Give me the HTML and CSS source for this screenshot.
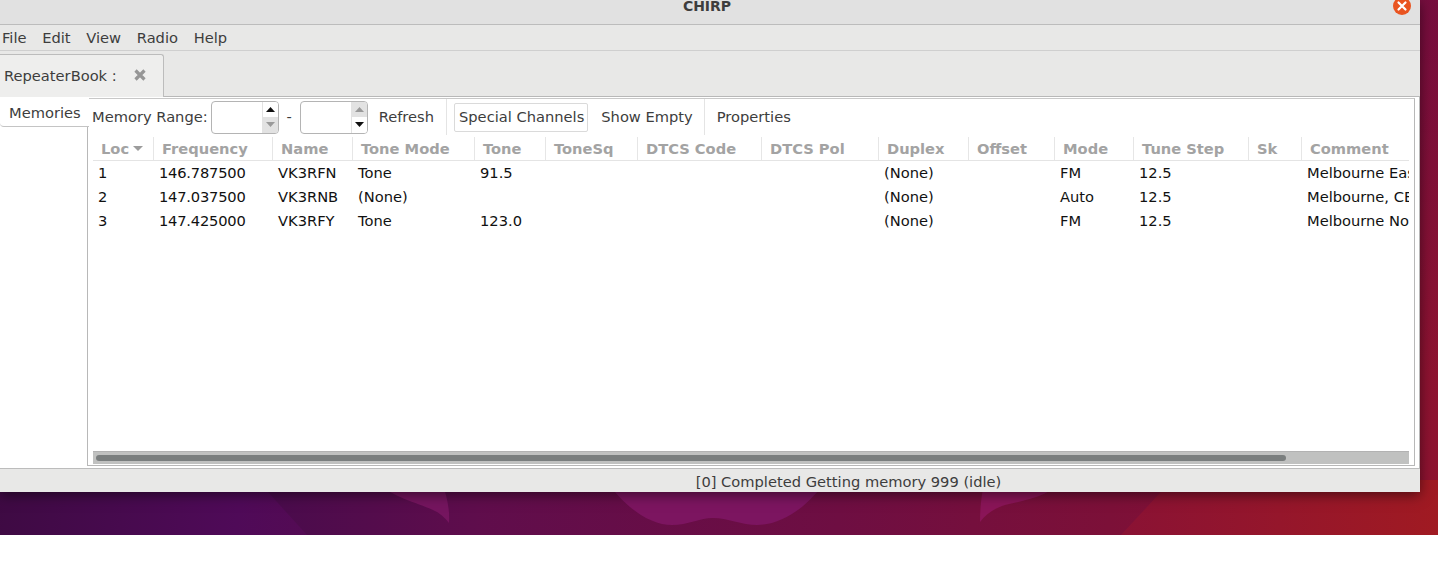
FILE: index.html
```html
<!DOCTYPE html>
<html lang="en">
<head>
<meta charset="utf-8">
<title>CHIRP</title>
<link rel="stylesheet" href="styles.css">
</head>
<body>
<div class="desktop">
  <svg class="wallpaper" width="1438" height="535" viewBox="0 0 1438 535" aria-hidden="true">
    <defs>
      <linearGradient id="wedge" x1="0" y1="0" x2="1" y2="0">
        <stop offset="0" stop-color="#480b4c"/>
        <stop offset="1" stop-color="#5f0d4c"/>
      </linearGradient>
      <linearGradient id="right" x1="0" y1="0" x2="1" y2="0">
        <stop offset="0" stop-color="#8a1234"/>
        <stop offset="1" stop-color="#a01a22"/>
      </linearGradient>
    </defs>
    <path d="M257 480L307 535H480V480Z" fill="url(#wedge)"/>
    <path d="M1172 480L1121 535H1438V480Z" fill="url(#right)"/>
    <path d="M375 480C392 498 416 502 433 510C440 513 445 518 449 523C450 510 447 495 441 480Z" fill="#75155f"/>
    <path d="M606 480C625 508 650 525 672 525C688 525 700 518 713 518C727 518 742 525 757 525C783 525 810 505 826 480Z" fill="#7c1560"/>
    <path d="M1060 480C1050 497 1025 500 1005 505C995 508 986 514 980 522C980 510 981 495 985 480Z" fill="#8a1558"/>
  </svg>
  <div class="window">
    <header class="titlebar">
      <span class="title">CHIRP</span>
      <span class="close-btn">
        <svg width="18" height="18" viewBox="0 0 18 18"><path d="M5.5 5.5L12.5 12.5M12.5 5.5L5.5 12.5" stroke="#fff" stroke-width="2.2" stroke-linecap="round"/></svg>
      </span>
    </header>
    <nav class="menubar">
      <span class="menu-item">File</span>
      <span class="menu-item">Edit</span>
      <span class="menu-item">View</span>
      <span class="menu-item">Radio</span>
      <span class="menu-item">Help</span>
    </nav>
    <div class="tabbar">
      <div class="tab">
        <span>RepeaterBook :</span>
        <svg class="tab-close" width="12" height="12" viewBox="0 0 12 12"><path d="M1.5 1.5L10.5 10.5M10.5 1.5L1.5 10.5" stroke="#969696" stroke-width="3.2"/></svg>
      </div>
    </div>
    <main class="page">
      <aside class="side">
        <div class="side-tab">Memories</div>
      </aside>
      <section class="panel">
        <div class="toolbar">
          <span class="tool">Memory Range:</span>
          <div class="spin">
            <div class="spin-field"></div>
            <div class="spin-btns">
              <div class="spin-btn"><svg width="9" height="5" viewBox="0 0 9 5"><path d="M0 5L4.5 0L9 5Z" fill="#111"/></svg></div>
              <div class="spin-btn off"><svg width="9" height="5" viewBox="0 0 9 5"><path d="M0 0L4.5 5L9 0Z" fill="#9a9a9a"/></svg></div>
            </div>
          </div>
          <span class="tool dash">-</span>
          <div class="spin">
            <div class="spin-field"></div>
            <div class="spin-btns">
              <div class="spin-btn off"><svg width="9" height="5" viewBox="0 0 9 5"><path d="M0 5L4.5 0L9 5Z" fill="#9a9a9a"/></svg></div>
              <div class="spin-btn"><svg width="9" height="5" viewBox="0 0 9 5"><path d="M0 0L4.5 5L9 0Z" fill="#111"/></svg></div>
            </div>
          </div>
          <span class="tool refresh">Refresh</span>
          <span class="tool-sep first"></span>
          <span class="tool boxed">Special Channels</span>
          <span class="tool empty">Show Empty</span>
          <span class="tool-sep second"></span>
          <span class="tool props">Properties</span>
        </div>
        <div class="table">
          <div class="row head">
            <div class="th"><span>Loc</span><svg class="sort" width="10" height="5" viewBox="0 0 10 5"><path d="M0 0L5 5L10 0Z" fill="#9c9c9c"/></svg></div>
            <div class="th">Frequency</div>
            <div class="th">Name</div>
            <div class="th">Tone Mode</div>
            <div class="th">Tone</div>
            <div class="th">ToneSq</div>
            <div class="th">DTCS Code</div>
            <div class="th">DTCS Pol</div>
            <div class="th">Duplex</div>
            <div class="th">Offset</div>
            <div class="th">Mode</div>
            <div class="th">Tune Step</div>
            <div class="th">Sk</div>
            <div class="th">Comment</div>
          </div>
          <div class="row">
            <div class="td">1</div><div class="td freq">146.787500</div><div class="td">VK3RFN</div><div class="td">Tone</div><div class="td">91.5</div><div class="td"></div><div class="td"></div><div class="td"></div><div class="td">(None)</div><div class="td"></div><div class="td">FM</div><div class="td">12.5</div><div class="td"></div><div class="td">Melbourne East</div>
          </div>
          <div class="row">
            <div class="td">2</div><div class="td freq">147.037500</div><div class="td">VK3RNB</div><div class="td">(None)</div><div class="td"></div><div class="td"></div><div class="td"></div><div class="td"></div><div class="td">(None)</div><div class="td"></div><div class="td">Auto</div><div class="td">12.5</div><div class="td"></div><div class="td">Melbourne, CBD</div>
          </div>
          <div class="row">
            <div class="td">3</div><div class="td freq">147.425000</div><div class="td">VK3RFY</div><div class="td">Tone</div><div class="td">123.0</div><div class="td"></div><div class="td"></div><div class="td"></div><div class="td">(None)</div><div class="td"></div><div class="td">FM</div><div class="td">12.5</div><div class="td"></div><div class="td">Melbourne North</div>
          </div>
        </div>
        <div class="scrollbar"><div class="thumb"></div></div>
      </section>
    </main>
    <footer class="statusbar">[0] Completed Getting memory 999 (idle)</footer>
  </div>
</div>
</body>
</html>
```
FILE: styles.css
```css
* { box-sizing: border-box; }
html, body { margin: 0; padding: 0; background: #fff; }
body { width: 1438px; height: 575px; overflow: hidden; font-family: "DejaVu Sans", sans-serif; font-size: 14.67px; color: #3d3d3d; }

.desktop { position: relative; width: 1438px; height: 535px; overflow: hidden;
  background: linear-gradient(to bottom, rgba(70, 0, 90, .3), rgba(70, 0, 90, 0) 70%), linear-gradient(97deg, #3a0a3e 0%, #4f0a58 20%, #5f0d4c 35%, #6e0e42 60%, #7c1038 78%, #8f1330 100%); }
.wallpaper { position: absolute; left: 0; top: 0; }

.window { position: relative; width: 1420px; height: 492px; display: flex; flex-direction: column; background: #e8e8e7; box-shadow: 0 3px 12px rgba(0, 0, 0, .5); overflow: hidden; }

.titlebar { position: relative; flex: none; height: 25px; background: #e1e1e1; border-bottom: 1px solid #bcbcbc; display: flex; justify-content: center; }
.title { font-weight: 700; font-size: 14px; line-height: 12px; color: #3d3d3d; margin-left: -6px; }
.close-btn { position: absolute; left: 1393px; top: -3px; width: 18px; height: 18px; border-radius: 50%; background: #e95420; display: flex; }

.menubar { flex: none; height: 26px; display: flex; padding-left: 2px; gap: 15.7px; align-items: center; border-bottom: 1px solid #cfcfcf; background: #e8e8e7; }
.menu-item { line-height: 24px; }

.tabbar { flex: none; height: 46px; display: flex; align-items: flex-end; background: #e8e8e7; border-bottom: 1px solid #b8b8b8; }
.tab { width: 164px; height: 43px; margin-bottom: -1px; display: flex; align-items: center; padding: 0 0 2px 4px; background: #eeeeed; border: 1px solid #bcbcbc; border-left: 0; border-bottom: 0; border-radius: 0 3px 0 0; }
.tab-close { margin-left: 17px; }

.page { flex: 1; min-height: 0; display: flex; background: #fff; border-right: 1px solid #b8b8b8; padding-right: 4px; }
.side { flex: none; width: 87px; }
.side-tab { width: 89px; height: 30px; position: relative; z-index: 1; padding: 7px 0 0 9px; line-height: 17px; background: #fff; border-bottom: 1px solid #c4c4c4; border-radius: 0 0 0 4px; }

.panel { flex: 1; min-width: 0; display: flex; flex-direction: column; padding: 0 5px; margin: 1px 0 2px; border: 1px solid #b8b8b8; border-top-color: #c8c8c8; }

.toolbar { flex: none; height: 36px; margin-bottom: 2px; display: flex; align-items: center; margin-left: -1px; }
.tool { white-space: nowrap; padding-bottom: 2px; }
.spin { width: 68px; height: 33px; margin-left: 3px; display: flex; border: 1px solid #b4b4b4; border-radius: 4px; overflow: hidden; background: #fff; }
.spin-field { flex: 1; }
.spin-btns { width: 16px; display: flex; flex-direction: column; border-left: 1px solid #e2e2e2; }
.spin-btn { flex: 1; display: flex; align-items: center; justify-content: center; background: #fff; }
.spin-btn.off { background: #e2e2e2; }
.dash { width: 18px; padding-left: 3px; text-align: center; }
.refresh { margin-left: 11px; }
.tool-sep { width: 1px; height: 36px; background: #e4e4e4; }
.tool-sep.first { margin-left: 12px; }
.boxed { margin-left: 7px; height: 29px; line-height: 26px; padding: 0 3px 0 4px; border: 1px solid #dadada; border-radius: 2px; }
.empty { margin-left: 13px; }
.tool-sep.second { margin-left: 11px; }
.props { margin-left: 12px; }

.table { flex: 1; min-height: 0; overflow: hidden; width: 1316px; color: #111; }
.row { display: grid; grid-template-columns: 60px 119px 80px 122px 71px 92px 124px 117px 90px 86px 79px 115px 53px 108px; height: 24px; }
.head { border-bottom: 1px solid #e4e4e4; }
.th { display: flex; align-items: center; height: 23px; padding-left: 8px; font-weight: 700; color: #a3a3a3; border-left: 1px solid #e6e6e6; white-space: nowrap; overflow: hidden; }
.th:first-child { border-left: 0; }
.sort { margin-left: 4px; }
.td { padding-left: 6px; line-height: 24px; white-space: nowrap; overflow: hidden; }
.td:first-child { padding-left: 5px; }
.freq { letter-spacing: -.2px; }

.scrollbar { flex: none; height: 13px; margin-bottom: 1px; width: 1316px; padding: 3px 3px 0; background: #c0c1c0; border-top: 1px solid #b2b2b2; }
.thumb { width: 1190px; height: 6px; border-radius: 3px; background: #7a7e7e; }

.statusbar { flex: none; height: 24px; border-top: 1px solid #bcbcbc; background: #e8e8e7; text-align: center; line-height: 26px; padding-left: 277px; white-space: nowrap; }
```
